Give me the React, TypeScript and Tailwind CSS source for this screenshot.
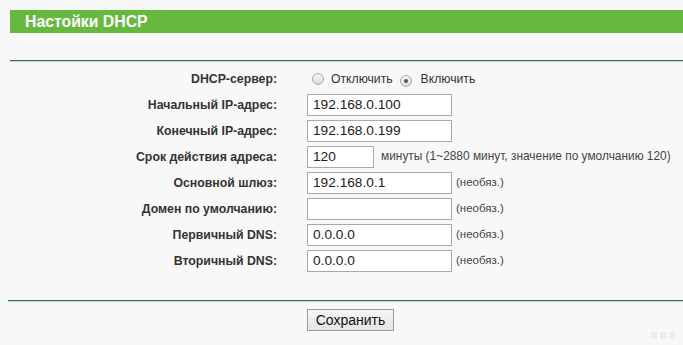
import React from "react";

const Radio = ({ checked }: { checked?: boolean }) => (
  <span className="inline-flex w-[12px] h-[12px] rounded-full border border-[#a9a9a9] bg-gradient-to-b from-[#f4f4f4] to-[#dcdcdc] items-center justify-center">
    {checked && <span className="w-[4px] h-[4px] rounded-full bg-[#555]" />}
  </span>
);

const Field = ({ value, w = "w-[145px]" }: { value: string; w?: string }) => (
  <div
    className={`${w} h-[22px] border border-[#a9a9a9] bg-white flex items-center pl-[5px] text-[13.7px] text-[#222]`}
  >
    {value}
  </div>
);

const Note = ({ children }: { children: React.ReactNode }) => (
  <span className="text-[11.5px] text-[#444] ml-[4px]">{children}</span>
);

const Row = ({ label, children }: { label: string; children: React.ReactNode }) => (
  <div className="flex items-center h-[26px]">
    <div className="w-[277px] text-right font-bold text-[12.3px] text-[#333]">{label}</div>
    <div className="ml-[30px] flex items-center">{children}</div>
  </div>
);

export default function App() {
  return (
    <div
      className="w-[683px] h-[345px] bg-[#f8f8f8] overflow-hidden relative"
      style={{ fontFamily: '"Liberation Sans", Arial, sans-serif' }}
    >
      <div className="pt-[10px] pl-[10px]">
        <div className="h-[23px] bg-[#66b83f] flex items-center pl-[15px] text-white font-bold text-[15.8px]">
          Настойки DHCP
        </div>
      </div>
      <div className="mt-[27px] ml-[10px]">
        <div className="h-[1px] bg-[#3d6f5c]" />
        <div className="h-[1px] bg-[#b7d9cb]" />
      </div>
      <div className="pt-[4px]">
        <Row label="DHCP-сервер:">
          <div className="flex items-center text-[12.2px] text-[#333] ml-[5px]">
            <Radio />
            <span className="ml-[7px]">Отключить</span>
            <span className="ml-[7px]"><Radio checked /></span>
            <span className="ml-[9px]">Включить</span>
          </div>
        </Row>
        <Row label="Начальный IP-адрес:">
          <Field value="192.168.0.100" />
        </Row>
        <Row label="Конечный IP-адрес:">
          <Field value="192.168.0.199" />
        </Row>
        <Row label="Срок действия адреса:">
          <Field value="120" w="w-[67px]" />
          <span className="text-[11.9px] text-[#444] ml-[7px]">
            минуты (1~2880 минут, значение по умолчанию 120)
          </span>
        </Row>
        <Row label="Основной шлюз:">
          <Field value="192.168.0.1" />
          <Note>(необяз.)</Note>
        </Row>
        <Row label="Домен по умолчанию:">
          <Field value="" />
          <Note>(необяз.)</Note>
        </Row>
        <Row label="Первичный DNS:">
          <Field value="0.0.0.0" />
          <Note>(необяз.)</Note>
        </Row>
        <Row label="Вторичный DNS:">
          <Field value="0.0.0.0" />
          <Note>(необяз.)</Note>
        </Row>
      </div>
      <div className="mt-[26px] ml-[8px]">
        <div className="h-[1px] bg-[#3d6f5c]" />
        <div className="h-[1px] bg-[#b7d9cb]" />
      </div>
      <div className="mt-[7px] pl-[307px]">
        <button className="w-[87px] h-[22px] border border-[#9a9a9a] bg-gradient-to-b from-[#f6f6f6] to-[#e4e4e4] text-[14px] text-[#111] flex items-center justify-center">
          Сохранить
        </button>
      </div>
      <svg className="absolute right-[8px] bottom-[5px]" width="24" height="9" viewBox="0 0 24 9">
        <rect x="0" y="1" width="6" height="7" rx="1" fill="#ececec" />
        <rect x="9" y="1" width="6" height="7" rx="1" fill="#ececec" />
        <rect x="18" y="1" width="6" height="7" rx="1" fill="#ececec" />
      </svg>
    </div>
  );
}
